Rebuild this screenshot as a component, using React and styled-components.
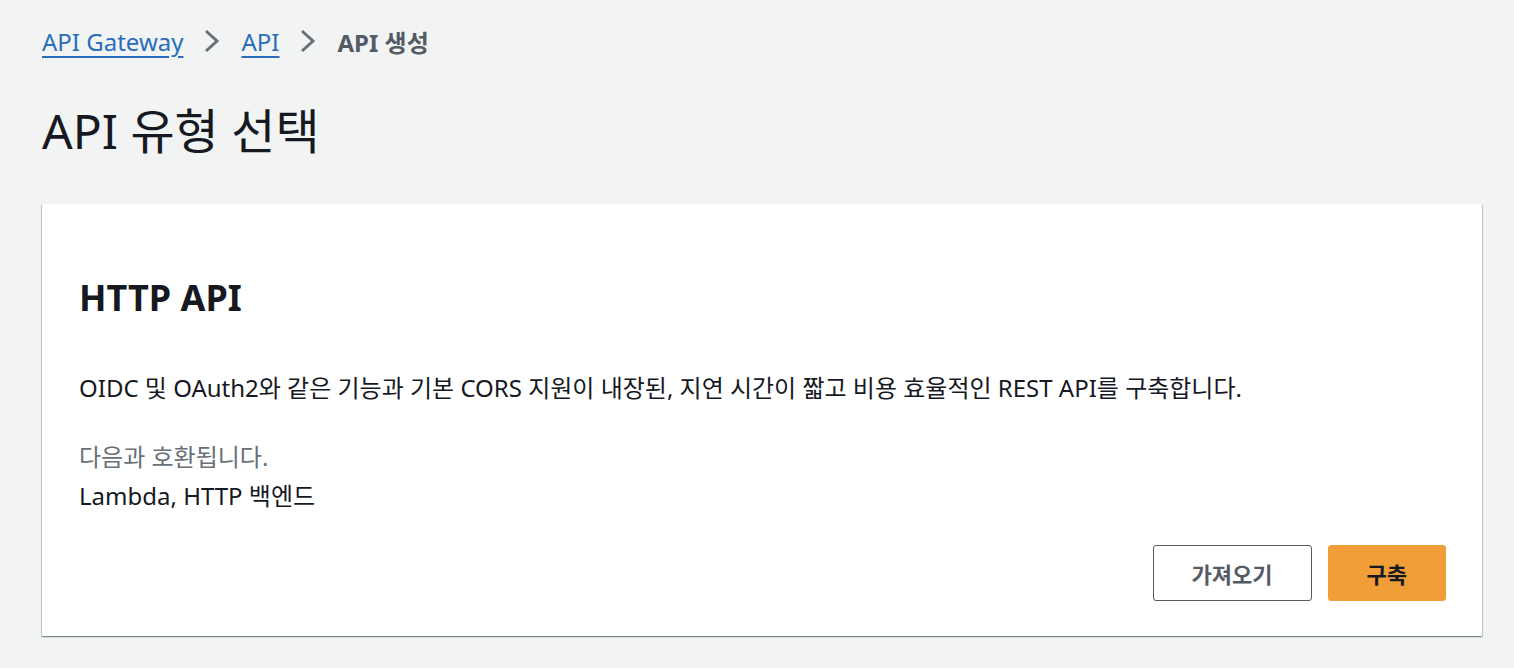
import React from 'react';
import styled, { createGlobalStyle } from 'styled-components';

const GlobalStyle = createGlobalStyle`
  html, body {
    margin: 0;
    padding: 0;
    background: #f2f3f3;
    font-family: "Noto Sans", "Noto Sans CJK KR", sans-serif;
    color: #16191f;
  }
`;

const Page = styled.div`
  padding: 22px 32px 32px 42px;
`;

const Breadcrumbs = styled.nav`
  display: flex;
  align-items: center;
  gap: 20px;
  height: 38px;
  font-size: 24px;
`;

const Crumb = styled.a`
  color: #2a6ebb;
  text-decoration: underline;
  text-underline-offset: 5px;
  text-decoration-thickness: 2px;
  cursor: pointer;
`;

const Current = styled.span`
  color: #545b64;
  font-weight: 700;
`;

const Chevron = styled.svg`
  width: 18px;
  height: 26px;
  flex-shrink: 0;
`;

const Title = styled.h1`
  margin: 42px 0 44px 0;
  font-size: 48px;
  font-weight: 400;
  line-height: 58px;
  color: #16191f;
`;

const Card = styled.section`
  background: #fff;
  width: 1440px;
  box-sizing: border-box;
  padding: 72px 36px 35px 37px;
  box-shadow: 0 1px 1px 0 rgba(0, 28, 36, 0.3), 1px 1px 1px 0 rgba(0, 28, 36, 0.15),
    -1px 1px 1px 0 rgba(0, 28, 36, 0.15);
`;

const CardTitle = styled.h2`
  margin: 0 0 50px 0;
  font-size: 36px;
  font-weight: 700;
  line-height: 44px;
`;

const Description = styled.p`
  margin: 0 0 31px 0;
  font-size: 24px;
  line-height: 36px;
`;

const Label = styled.div`
  font-size: 24px;
  line-height: 39px;
  color: ${p => (p.muted ? '#687078' : '#16191f')};
`;

const Actions = styled.div`
  display: flex;
  justify-content: flex-end;
  gap: 16px;
  margin-top: 30px;
`;

const Button = styled.button`
  height: 56px;
  padding: 0 38px;
  border-radius: 3px;
  font-family: inherit;
  font-size: 22px;
  font-weight: 700;
  cursor: pointer;
  border: ${p => (p.primary ? '1px solid #f19e38' : '1px solid #545b64')};
  background: ${p => (p.primary ? '#f19e38' : '#fff')};
  color: ${p => (p.primary ? '#16191f' : '#545b64')};
`;

const ChevronIcon = () => (
  <Chevron viewBox="0 0 18 26">
    <path d="M3 3 L14 13 L3 23" fill="none" stroke="#687078" strokeWidth="3" />
  </Chevron>
);

export default function App() {
  return (
    <>
      <GlobalStyle />
      <Page>
        <Breadcrumbs>
          <Crumb>API Gateway</Crumb>
          <ChevronIcon />
          <Crumb>API</Crumb>
          <ChevronIcon />
          <Current>API 생성</Current>
        </Breadcrumbs>
        <Title>API 유형 선택</Title>
        <Card>
          <CardTitle>HTTP API</CardTitle>
          <Description>
            OIDC 및 OAuth2와 같은 기능과 기본 CORS 지원이 내장된, 지연 시간이 짧고 비용 효율적인 REST API를 구축합니다.
          </Description>
          <Label muted>다음과 호환됩니다.</Label>
          <Label>Lambda, HTTP 백엔드</Label>
          <Actions>
            <Button>가져오기</Button>
            <Button primary>구축</Button>
          </Actions>
        </Card>
      </Page>
    </>
  );
}
